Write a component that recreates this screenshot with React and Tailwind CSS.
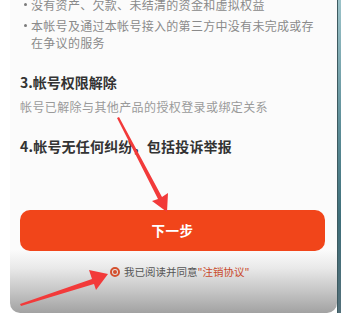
import React from "react";

const font = { fontFamily: '"Noto Sans CJK SC", "Noto Sans", sans-serif' };

function Bullet({ children }) {
  return (
    <div className="flex text-[12px] leading-[17px] text-[#8a8a8a] tracking-[0.3px]">
      <span className="w-[7px] shrink-0 flex items-start pt-[7px]">
        <span className="w-[3px] h-[3px] rounded-full bg-[#7a7a7a]" />
      </span>
      <span>{children}</span>
    </div>
  );
}

export default function App() {
  return (
    <div className="relative w-[341px] h-[315px] overflow-hidden bg-white" style={font}>
      <div className="flex h-[313px]">
        <div className="ml-[10px] w-[327px] h-[313px] rounded-b-[10px] bg-[linear-gradient(to_bottom,#fbfbfb_0px,#fbfbfb_250px,#e9e9e9_268px,#c4c4c4_292px,#a2a2a2_313px)] flex flex-col">
          <div className="-mt-[4px] pl-[14px] pr-[18px] flex flex-col gap-[4px]">
            <Bullet>没有资产、欠款、未结清的资金和虚拟权益</Bullet>
            <Bullet>本帐号及通过本帐号接入的第三方中没有未完成或存在争议的服务</Bullet>
          </div>
          <div className="mt-[21px] pl-[10px] text-[14px] leading-[20px] font-bold text-[#333]">
            3.帐号权限解除
          </div>
          <div className="mt-[6px] pl-[10px] text-[12px] leading-[17px] text-[#9a9a9a] tracking-[0.4px]">
            帐号已解除与其他产品的授权登录或绑定关系
          </div>
          <div className="mt-[21px] pl-[10px] text-[14px] leading-[20px] font-bold text-[#333] tracking-[0.2px]">
            4.帐号无任何纠纷，包括投诉举报
          </div>
          <button className="mt-[54px] ml-[10px] w-[305px] h-[41px] rounded-[10px] bg-[#f1451a] text-white text-[13.5px] font-bold tracking-[0.5px] flex items-center justify-center">
            下一步
          </button>
          <div className="mt-[14px] pl-[100px] flex items-center gap-[4px] text-[10.5px] leading-[14px] text-[#555]">
            <span className="w-[10px] h-[10px] rounded-full border-[2px] border-[#d4502e] flex items-center justify-center">
              <span className="w-[4px] h-[4px] rounded-full bg-[#d4502e]" />
            </span>
            <span>
              我已阅读并同意<span className="text-[#c94a2c]">"注销协议"</span>
            </span>
          </div>
        </div>
        <div className="w-[4px] h-[313px] border-l border-[#3d5a60] bg-[linear-gradient(to_bottom,#9cc3c9,#5d8e98_40%,#3f6f7a_70%,#54707a)]" />
      </div>
      <svg className="absolute inset-0 pointer-events-none" width="341" height="315" viewBox="0 0 341 315">
        <polygon points="117,118 119,117 162,197 168,193 167,212 152,201 158,199" fill="#f23a3a" />
        <polygon points="21,306 20,304 92,279 89,270 108,274 96,290 94,284" fill="#f23a3a" />
      </svg>
    </div>
  );
}
